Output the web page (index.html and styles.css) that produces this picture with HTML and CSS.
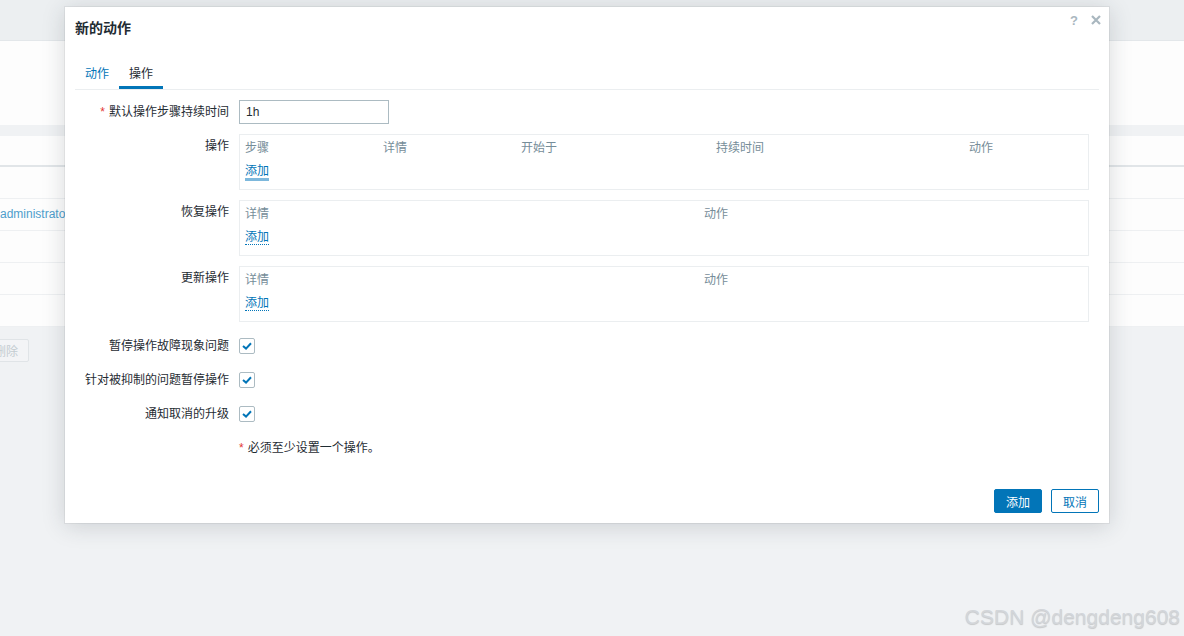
FILE: index.html
```html
<!DOCTYPE html>
<html lang="zh-CN">
<head>
    <meta charset="UTF-8">
    <title>新的动作</title>
    <link rel="stylesheet" href="styles.css">
</head>
<body>

<!--背景页面（被对话框遮住的部分）-->
<div class="page">
    <div class="page_header"></div>
    <div class="page_filter"></div>
    <div class="page_list">
        <div class="list_head"></div>
        <div class="list_row"></div>
        <div class="list_row"><a href="#" class="list_link">administrator</a></div>
        <div class="list_row"></div>
        <div class="list_row"></div>
        <div class="list_row"></div>
    </div>
    <div class="list_foot">
        <button class="btn_disabled" disabled>删除</button>
    </div>
</div>

<!--对话框-->
<div class="dialog">
    <div class="dlg_head">
        <h4 class="dlg_title">新的动作</h4>
        <div class="dlg_tools">
            <span class="dlg_help">?</span>
            <span class="dlg_close">
                <svg width="12" height="12" viewBox="0 0 12 12"><path d="M2 2 L10 10 M10 2 L2 10" stroke="#a9b7bf" stroke-width="2.2"/></svg>
            </span>
        </div>
    </div>

    <div class="tabs">
        <a href="#" class="tab">动作</a>
        <a href="#" class="tab tab_active">操作</a>
    </div>

    <div class="form">
        <label class="f_label req" for="esc_period">默认操作步骤持续时间</label>
        <div class="f_field"><input type="text" id="esc_period" class="f_input" value="1h"></div>

        <label class="f_label">操作</label>
        <div class="f_field">
            <div class="op_box">
                <div class="op_head five">
                    <span>步骤</span><span>详情</span><span>开始于</span><span>持续时间</span><span>动作</span>
                </div>
                <div class="op_add"><a href="#" class="link_focus">添加</a></div>
            </div>
        </div>

        <label class="f_label">恢复操作</label>
        <div class="f_field">
            <div class="op_box">
                <div class="op_head two"><span>详情</span><span>动作</span></div>
                <div class="op_add"><a href="#" class="link_dotted">添加</a></div>
            </div>
        </div>

        <label class="f_label">更新操作</label>
        <div class="f_field">
            <div class="op_box">
                <div class="op_head two"><span>详情</span><span>动作</span></div>
                <div class="op_add"><a href="#" class="link_dotted">添加</a></div>
            </div>
        </div>

        <label class="f_label first_chk">暂停操作故障现象问题</label>
        <div class="f_field first_chk"><span class="chk"><svg width="10" height="8" viewBox="0 0 10 8"><path d="M1 4 L4 6.6 L9 1.2" fill="none" stroke="#0275b8" stroke-width="2"/></svg></span></div>

        <label class="f_label">针对被抑制的问题暂停操作</label>
        <div class="f_field"><span class="chk"><svg width="10" height="8" viewBox="0 0 10 8"><path d="M1 4 L4 6.6 L9 1.2" fill="none" stroke="#0275b8" stroke-width="2"/></svg></span></div>

        <label class="f_label">通知取消的升级</label>
        <div class="f_field"><span class="chk"><svg width="10" height="8" viewBox="0 0 10 8"><path d="M1 4 L4 6.6 L9 1.2" fill="none" stroke="#0275b8" stroke-width="2"/></svg></span></div>

        <span class="f_label"></span>
        <div class="f_field f_text req">必须至少设置一个操作。</div>
    </div>

    <div class="dlg_foot">
        <button class="btn_main">添加</button>
        <button class="btn_alt">取消</button>
    </div>
</div>

<div class="watermark">CSDN @dengdeng608</div>

</body>
</html>
```

FILE: styles.css
```css
*{
    margin: 0px;
    padding: 0px;
    box-sizing: border-box;
}
body{
    width: 1184px;
    height: 636px;
    overflow: hidden;
    position: relative;
    background-color: #f0f2f4;
    font-family: "Liberation Sans", Arial, "Noto Sans CJK SC", sans-serif;
    font-size: 12px;
    color: #1f2c33;
}

/*背景页面*/
.page_header{
    height: 41px;
    background-color: #eceff1;
    border-bottom: 1px solid #e3e7ea;
}
.page_filter{
    height: 84px;
    background-color: #fdfdfd;
}
.page_list{
    margin-top: 11px;
    background-color: #fdfdfd;
}
.list_head{
    height: 31px;
    border-bottom: 2px solid #e1e5e8;
}
.list_row{
    height: 32px;
    line-height: 31px;
    border-bottom: 1px solid #eef0f2;
}
.list_link{
    color: #4f9dcc;
    text-decoration: none;
}
.list_foot{
    padding-top: 12px;
}
.btn_disabled{
    margin-left: -17px;
    height: 23px;
    padding: 0 10px;
    background-color: #f3f4f6;
    border: 1px solid #e0e4e7;
    border-radius: 2px;
    color: #c3ccd1;
    font-family: inherit;
    font-size: 12px;
}

/*对话框*/
.dialog{
    position: absolute;
    left: 65px;
    top: 7px;
    width: 1044px;
    height: 516px;
    background-color: white;
    display: flex;
    flex-direction: column;
    box-shadow: 0 0 0 1px rgba(0, 0, 0, 0.05), 0 3px 22px rgba(40, 50, 60, 0.18);
}
.dlg_head{
    height: 42px;
    display: flex;
    align-items: flex-start;
    padding: 5px 5px 0 10px;
}
.dlg_title{
    margin-top: 7px;
    font-size: 14px;
    line-height: 18px;
    font-weight: bold;
    color: #1f2c33;
}
.dlg_tools{
    margin-left: auto;
    display: flex;
    gap: 6px;
}
.dlg_help,.dlg_close{
    width: 16px;
    height: 16px;
    display: flex;
    align-items: center;
    justify-content: center;
}
.dlg_help{
    font-size: 13px;
    font-weight: bold;
    color: #a9b7bf;
}

.tabs{
    display: flex;
    margin: 0 10px;
    border-bottom: 1px solid #ebeef0;
}
.tab{
    padding: 17px 10px 4px;
    line-height: 16px;
    border-bottom: 3px solid transparent;
    color: #0275b8;
    text-decoration: none;
}
.tab_active{
    color: #1f2c33;
    border-bottom-color: #0275b8;
}

.form{
    margin: 0 10px;
    padding-top: 10px;
    display: grid;
    grid-template-columns: 154px 850px;
    column-gap: 10px;
    row-gap: 10px;
}
.f_label{
    text-align: right;
    line-height: 24px;
    white-space: nowrap;
}
.first_chk{
    margin-top: 2px;
}
.f_text{
    line-height: 24px;
}
.req::before{
    content: "*";
    color: #e33734;
    margin-right: 4px;
}
.f_input{
    width: 150px;
    height: 24px;
    padding: 0 6px;
    border: 1px solid #acbbc2;
    font-family: inherit;
    font-size: 12px;
    color: #1f2c33;
}

.op_box{
    border: 1px solid #ebeef0;
    padding: 5px 5px 10px;
}
.op_head{
    display: grid;
    line-height: 16px;
    color: #768d99;
}
.op_head.five{
    grid-template-columns: 138px 138px 195px 253px 1fr;
}
.op_head.two{
    grid-template-columns: 459px 1fr;
}
.op_add{
    margin-top: 7px;
    line-height: 16px;
}
.op_add a{
    color: #0275b8;
    text-decoration: none;
}
.link_dotted{
    border-bottom: 1px dotted #0275b8;
}
.link_focus{
    border-bottom: 3px solid #7db8dc;
}

.chk{
    margin-top: 4px;
    width: 16px;
    height: 16px;
    border: 1px solid #acbbc2;
    border-radius: 2px;
    display: flex;
    align-items: center;
    justify-content: center;
}

.dlg_foot{
    margin-top: auto;
    display: flex;
    justify-content: flex-end;
    gap: 9px;
    padding: 0 10px 10px;
}
.btn_main,.btn_alt{
    height: 24px;
    padding: 0 11px;
    border: 1px solid #0275b8;
    border-radius: 2px;
    font-family: inherit;
    font-size: 12px;
}
.btn_main{
    background-color: #0275b8;
    color: white;
}
.btn_alt{
    background-color: white;
    color: #0275b8;
}

.watermark{
    position: absolute;
    right: 4px;
    bottom: 7px;
    font-size: 21px;
    color: #d3d6da;
    text-shadow: 0 1px 1px rgba(0, 0, 0, 0.18);
}
```
